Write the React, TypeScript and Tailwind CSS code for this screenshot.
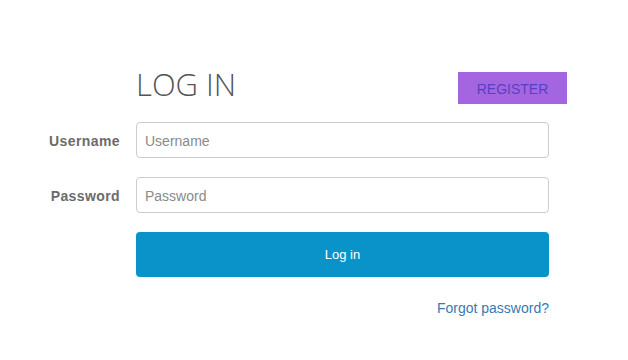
import React from "react";

const App: React.FC = () => {
	return (
		<div className="w-[628px] h-[360px] bg-white font-['Liberation_Sans',Arial,sans-serif]">
			<div className="pt-[72px] flex flex-col">
				{/* Header */}
				<div className="flex ml-[136px] w-[431px] h-8 items-center justify-between">
					<h1 className="font-['Open_Sans',sans-serif] font-light text-[31px] leading-none text-[#555] -mt-2">
						LOG IN
					</h1>
					<button className="w-[109px] h-8 pt-0.5 bg-[#a366e0] text-[#5a3fc4] text-sm">
						REGISTER
					</button>
				</div>

				{/* Form */}
				<div className="mt-[18px] flex flex-col gap-[19px]">
					<div className="flex items-center gap-4">
						<label className="w-[120px] pt-0.5 text-right text-sm font-bold tracking-[0.4px] text-[#6b6b6b]">
							Username
						</label>
						<input
							placeholder="Username"
							className="w-[413px] h-9 px-2 pt-0.5 border border-[#ccc] rounded text-sm text-[#555] placeholder:text-[#8a8a8a] outline-none"
						/>
					</div>
					<div className="flex items-center gap-4">
						<label className="w-[120px] pt-0.5 text-right text-sm font-bold tracking-[0.4px] text-[#6b6b6b]">
							Password
						</label>
						<input
							type="password"
							placeholder="Password"
							className="w-[413px] h-9 px-2 pt-0.5 border border-[#ccc] rounded text-sm text-[#555] placeholder:text-[#8a8a8a] outline-none"
						/>
					</div>
					<div className="ml-[136px]">
						<button className="w-[413px] h-[45px] bg-[#0a93c9] rounded text-white text-[13px]">
							Log in
						</button>
					</div>
				</div>

				<div className="ml-[136px] w-[413px] mt-[19px] text-right">
					<a href="#" className="text-sm text-[#3a7ab0]">
						Forgot password?
					</a>
				</div>
			</div>
		</div>
	);
};

export default App;
